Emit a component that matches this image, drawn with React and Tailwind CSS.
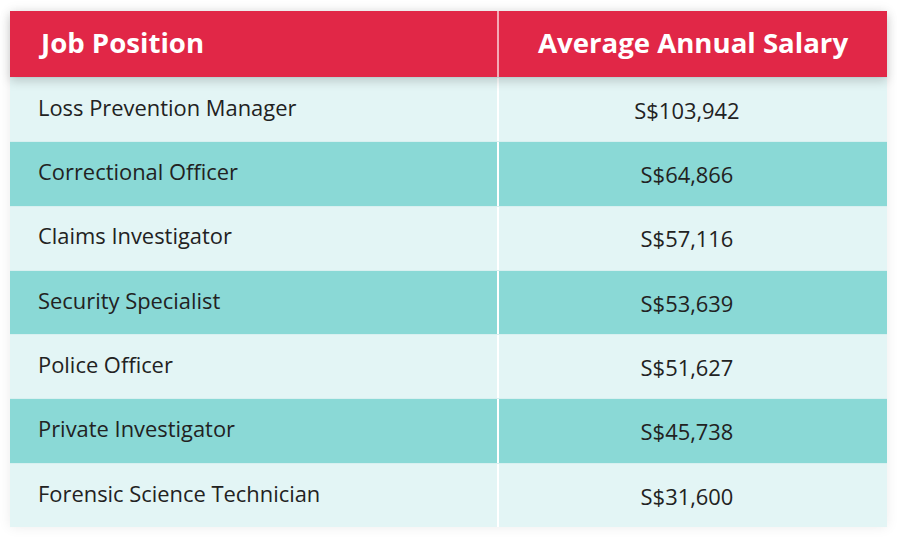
import React from "react";

const rows = [
  ["Loss Prevention Manager", "S$103,942"],
  ["Correctional Officer", "S$64,866"],
  ["Claims Investigator", "S$57,116"],
  ["Security Specialist", "S$53,639"],
  ["Police Officer", "S$51,627"],
  ["Private Investigator", "S$45,738"],
  ["Forensic Science Technician", "S$31,600"],
];

export default function App() {
  return (
    <div className="w-[900px] h-[544px] bg-white pt-[11px] pl-[10px]" style={{ fontFamily: '"Open Sans", sans-serif' }}>
      <div className="w-[877px] shadow-[0_0_12px_rgba(0,0,0,0.08)]">
        <div className="relative z-10 flex h-[66px] bg-[#e12747] text-white font-bold text-[27.6px] shadow-[0_4px_10px_rgba(0,0,0,0.18)]">
          <div className="w-[487px] flex items-center pl-[31px] pb-[2px]">Job Position</div>
          <div className="w-[2px] bg-[#f3aab6]"></div>
          <div className="flex-1 flex items-center justify-center pb-[2px]">Average Annual Salary</div>
        </div>
        {rows.map(([job, sal], i) => (
          <div
            key={job}
            className={`flex h-[64.3px] text-[21.9px] text-[#222] border-t border-[#d8f0f0] ${i % 2 === 0 ? "bg-[#e3f5f5]" : "bg-[#8ad9d6]"}`}
          >
            <div className="w-[487px] flex items-center pl-[28px] pb-[3px]">{job}</div>
            <div className="w-[2px] bg-white"></div>
            <div className="flex-1 flex items-center justify-center pt-[3px] pr-[12px]">{sal}</div>
          </div>
        ))}
      </div>
    </div>
  );
}
